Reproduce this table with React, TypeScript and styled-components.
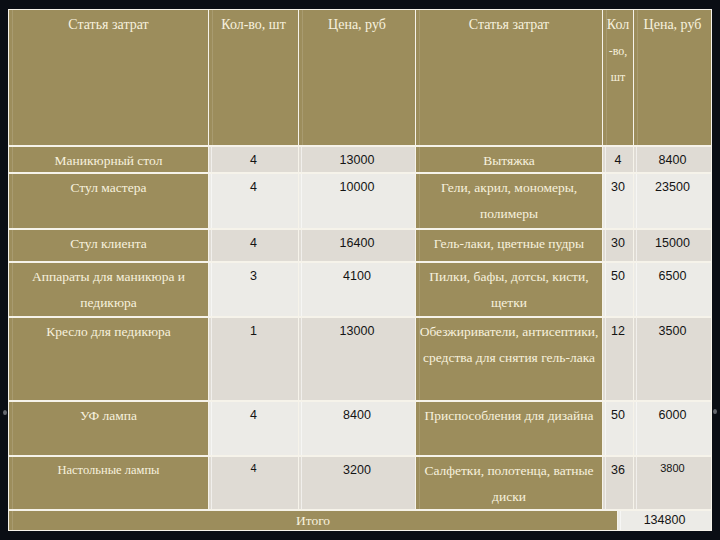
import * as React from 'react';
import styled, { createGlobalStyle } from 'styled-components';

const GlobalStyle = createGlobalStyle`
  html, body {
    margin: 0;
    padding: 0;
    background: #0a0e14;
  }
`;

const Page = styled.div`
  position: relative;
  box-sizing: border-box;
  width: 720px;
  height: 540px;
  padding: 9px 0 0 8px;
  background: #0a0e14;
  overflow: hidden;
`;

const Table = styled.div`
  box-sizing: border-box;
  width: 704px;
  display: flex;
  flex-direction: column;
  gap: 2px;
  padding: 1px;
  background: #f6f3ea;
`;

const Grid = styled.div`
  display: grid;
  grid-template-columns: 199px 89px 116px 186px 30px 77px;
  grid-template-rows: 135px 25px 54px 31px 53px 82px 53px 52px;
  gap: 2px 1px;
`;

const TextCell = styled.div<{ $small?: boolean }>`
  background-color: #9c8d5c;
  background-image: linear-gradient(
    90deg,
    transparent 3px,
    rgba(255, 255, 255, 0.12) 3px,
    rgba(255, 255, 255, 0.12) 4px,
    transparent 4px
  );
  color: #f7f1de;
  font-family: 'Liberation Serif', 'Times New Roman', serif;
  font-size: ${(p) => (p.$small ? '12.5px' : '13.5px')};
  line-height: 26px;
  text-align: center;
  padding-top: ${(p) => (p.$small ? '0' : '1px')};
  overflow: visible;
`;

const HeadCell = styled(TextCell)`
  font-size: 14px;
  padding-top: 2px;
`;

const Line = styled.span<{ $small?: boolean }>`
  display: block;
  white-space: nowrap;
  font-size: ${(p) => (p.$small ? '12px' : 'inherit')};
`;

const NumCell = styled.div<{ $tone: 'dark' | 'light'; $small?: boolean }>`
  background-color: ${(p) => (p.$tone === 'dark' ? '#dfdbd4' : '#ecebe7')};
  background-image: linear-gradient(
    90deg,
    transparent 2px,
    rgba(255, 255, 255, 0.55) 2px,
    rgba(255, 255, 255, 0.55) 3px,
    transparent 3px
  );
  color: #141414;
  font-family: 'Liberation Sans', Arial, sans-serif;
  font-size: ${(p) => (p.$small ? '11px' : '12.5px')};
  line-height: ${(p) => (p.$small ? '22px' : '26px')};
  text-align: center;
`;

const TotalRow = styled.div`
  display: grid;
  grid-template-columns: 608px 93px;
  height: 19px;
  gap: 1px;
`;

const TotalLabel = styled(TextCell)`
  line-height: 19px;
  padding-top: 0;
`;

const TotalValue = styled(NumCell)`
  line-height: 19px;
`;

const Speck = styled.div<{ $left: number; $top: number }>`
  position: absolute;
  left: ${(p) => p.$left}px;
  top: ${(p) => p.$top}px;
  width: 4px;
  height: 5px;
  border-radius: 50%;
  background: #8d9096;
  opacity: 0.7;
`;

type Row = {
  item: string[];
  qty: string;
  price: string;
  item2: string[];
  qty2: string;
  price2: string;
  small?: boolean;
};

const rows: Row[] = [
  { item: ['Маникюрный стол'], qty: '4', price: '13000', item2: ['Вытяжка'], qty2: '4', price2: '8400' },
  { item: ['Стул мастера'], qty: '4', price: '10000', item2: ['Гели, акрил, мономеры,', 'полимеры'], qty2: '30', price2: '23500' },
  { item: ['Стул клиента'], qty: '4', price: '16400', item2: ['Гель-лаки, цветные пудры'], qty2: '30', price2: '15000' },
  { item: ['Аппараты для маникюра и', 'педикюра'], qty: '3', price: '4100', item2: ['Пилки, бафы, дотсы, кисти,', 'щетки'], qty2: '50', price2: '6500' },
  { item: ['Кресло для педикюра'], qty: '1', price: '13000', item2: ['Обезжириватели, антисептики,', 'средства для снятия гель-лака'], qty2: '12', price2: '3500' },
  { item: ['УФ лампа'], qty: '4', price: '8400', item2: ['Приспособления для дизайна'], qty2: '50', price2: '6000' },
  { item: ['Настольные лампы'], qty: '4', price: '3200', item2: ['Салфетки, полотенца, ватные', 'диски'], qty2: '36', price2: '3800', small: true },
];

const Lines: React.FC<{ lines: string[] }> = ({ lines }) => (
  <>
    {lines.map((l, i) => (
      <Line key={i}>{l}</Line>
    ))}
  </>
);

export default function App() {
  return (
    <Page>
      <GlobalStyle />
      <Table>
        <Grid>
          <HeadCell>Статья затрат</HeadCell>
          <HeadCell>Кол-во, шт</HeadCell>
          <HeadCell>Цена, руб</HeadCell>
          <HeadCell>Статья затрат</HeadCell>
          <HeadCell>
            <Line>Кол</Line>
            <Line $small>-во,</Line>
            <Line $small>шт</Line>
          </HeadCell>
          <HeadCell>Цена, руб</HeadCell>
          {rows.map((r, i) => {
            const tone = i % 2 === 0 ? 'dark' : 'light';
            return (
              <React.Fragment key={i}>
                <TextCell $small={r.small}>
                  <Lines lines={r.item} />
                </TextCell>
                <NumCell $tone={tone} $small={r.small}>{r.qty}</NumCell>
                <NumCell $tone={tone}>{r.price}</NumCell>
                <TextCell>
                  <Lines lines={r.item2} />
                </TextCell>
                <NumCell $tone={tone}>{r.qty2}</NumCell>
                <NumCell $tone={tone} $small={r.small}>{r.price2}</NumCell>
              </React.Fragment>
            );
          })}
        </Grid>
        <TotalRow>
          <TotalLabel>Итого</TotalLabel>
          <TotalValue $tone='light'>134800</TotalValue>
        </TotalRow>
      </Table>
      <Speck $left={3} $top={410} />
      <Speck $left={713} $top={409} />
    </Page>
  );
}
